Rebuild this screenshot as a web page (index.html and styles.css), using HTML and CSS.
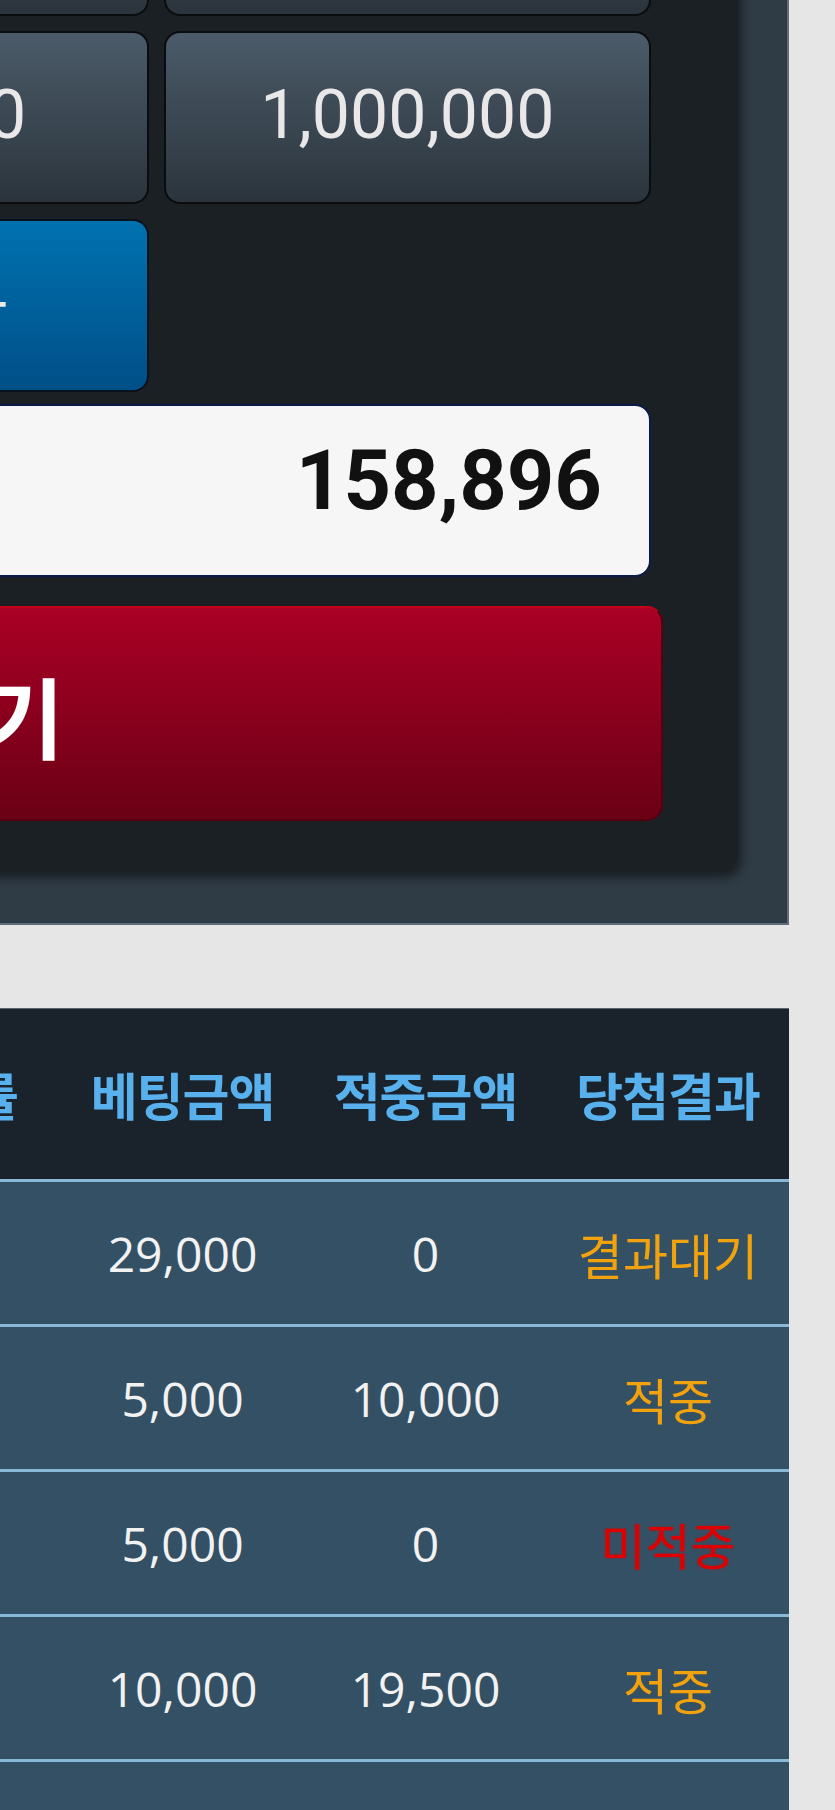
FILE: index.html
```html
<!DOCTYPE html>
<html lang="ko">
<head>
    <meta charset="UTF-8">
    <meta name="viewport" content="width=device-width, initial-scale=1.0">
    <title>베팅</title>
    <link rel="stylesheet" href="styles.css">
</head>
<body>

<div class="page">
    <section class="bet-panel">
        <div class="bet-inner">
            <div class="amount-grid">
                <button class="amount-btn">10,000</button>
                <button class="amount-btn">50,000</button>
                <button class="amount-btn">100,000</button>
                <button class="amount-btn">300,000</button>
                <button class="amount-btn">500,000</button>
                <button class="amount-btn">1,000,000</button>
                <button class="amount-btn">최대</button>
                <button class="reset-btn">초기화</button>
            </div>
            <div class="balance">158,896</div>
            <button class="bet-btn">베팅하기</button>
        </div>
    </section>

    <table class="history">
        <colgroup>
            <col class="col-time">
            <col class="col-game">
            <col class="col-odds">
            <col class="col-std">
            <col class="col-std">
            <col class="col-last">
        </colgroup>
        <thead>
            <tr>
                <th>베팅시간</th>
                <th>경기정보</th>
                <th>배당률</th>
                <th>베팅금액</th>
                <th>적중금액</th>
                <th>당첨결과</th>
            </tr>
        </thead>
        <tbody>
            <tr>
                <td>05-12 21:40</td>
                <td>홀짝 / 짝</td>
                <td>1.95</td>
                <td>29,000</td>
                <td>0</td>
                <td class="status wait">결과대기</td>
            </tr>
            <tr>
                <td>05-12 21:35</td>
                <td>홀짝 / 홀</td>
                <td>2.00</td>
                <td>5,000</td>
                <td>10,000</td>
                <td class="status win">적중</td>
            </tr>
            <tr>
                <td>05-12 21:30</td>
                <td>언더오버 / 오버</td>
                <td>1.95</td>
                <td>5,000</td>
                <td>0</td>
                <td class="status lose">미적중</td>
            </tr>
            <tr>
                <td>05-12 21:25</td>
                <td>홀짝 / 짝</td>
                <td>1.95</td>
                <td>10,000</td>
                <td>19,500</td>
                <td class="status win">적중</td>
            </tr>
            <tr>
                <td>05-12 21:20</td>
                <td>홀짝 / 홀</td>
                <td>1.95</td>
                <td>10,000</td>
                <td>0</td>
                <td class="status lose">미적중</td>
            </tr>
        </tbody>
    </table>
</div>

</body>
</html>
```

FILE: styles.css
```css
body {
    margin: 0;
    padding: 0;
    background-color: #e6e6e6;
    font-family: Roboto, "Noto Sans CJK KR", sans-serif;
    overflow: hidden;
}
.page {
    width: 1689px;
    margin: -237px 0 0 -900px;
}

/* bet panel */
.bet-panel {
    background: #2f3b45;
    border-right: 2px solid #5e6d78;
    border-bottom: 2px solid #5e6d78;
    padding: 40px 49px 51px 15px;
}
.bet-inner {
    background: #1b2024;
    border-radius: 18px;
    box-shadow: 4px 6px 10px rgba(0, 0, 0, 0.45);
    padding: 40px 75px 51px 0;
}
.amount-grid {
    display: grid;
    grid-template-columns: repeat(3, 1fr);
    grid-auto-rows: 173px;
    gap: 15px;
    margin: 0 12px 0 44px;
}
.amount-btn, .reset-btn {
    display: flex;
    align-items: center;
    justify-content: center;
    border: 2px solid #0a0c0e;
    border-radius: 16px;
    color: #e8e8e8;
    font-family: Roboto, "Noto Sans CJK KR", sans-serif;
    font-size: 68px;
    padding: 0 0 6px;
    cursor: pointer;
}
.amount-btn {
    background: linear-gradient(#4b5b69, #2b343c);
}
.reset-btn {
    background: linear-gradient(#0072b0, #004f88);
    border-color: #07121d;
    padding-left: 18px;
}
.balance {
    display: flex;
    align-items: center;
    justify-content: flex-end;
    box-sizing: border-box;
    height: 173px;
    margin: 12px 12px 0 44px;
    padding: 0 47px 20px 0;
    background: #f6f6f6;
    border: 2px solid #0c1a4a;
    border-radius: 16px;
    color: #111;
    font-family: Roboto, sans-serif;
    font-weight: 700;
    font-size: 83px;
}
.bet-btn {
    display: block;
    width: 100%;
    height: 215px;
    margin-top: 29px;
    padding: 0 0 0 26px;
    background: linear-gradient(#aa0025, #6a0015);
    border: 2px solid #560010;
    border-top-color: #c4001a;
    border-radius: 16px;
    color: #fff;
    font-family: "Noto Sans CJK KR", sans-serif;
    font-weight: 700;
    font-size: 88px;
    cursor: pointer;
}

/* history table */
.history {
    width: 1689px;
    margin-top: 83px;
    table-layout: fixed;
    border-collapse: separate;
    border-spacing: 0;
    border-top: 1px solid #5a6570;
    font-family: "Open Sans", "Noto Sans CJK KR", sans-serif;
    text-align: center;
}
.col-time { width: 337px; }
.col-game { width: 400px; }
.col-odds { width: 224px; }
.col-std { width: 243px; }
.col-last { width: 242px; }
.history th {
    height: 170px;
    padding: 0;
    background: #1a232c;
    color: #58b1ec;
    font-family: "Noto Sans CJK KR", sans-serif;
    font-weight: 700;
    font-size: 51px;
    letter-spacing: -1px;
    white-space: nowrap;
}
.history td {
    height: 142px;
    padding: 0;
    background: #345064;
    border-top: 3px solid #8ab8d8;
    color: #f2f2f2;
    font-size: 48px;
    white-space: nowrap;
}
.history td.status {
    font-family: "Noto Sans CJK KR", sans-serif;
    font-size: 49px;
}
.status.wait, .status.win {
    color: #f2a20c;
}
.status.lose {
    color: #dc0000;
    text-shadow: 0 0 2px rgba(220, 0, 0, 0.6);
}
```
